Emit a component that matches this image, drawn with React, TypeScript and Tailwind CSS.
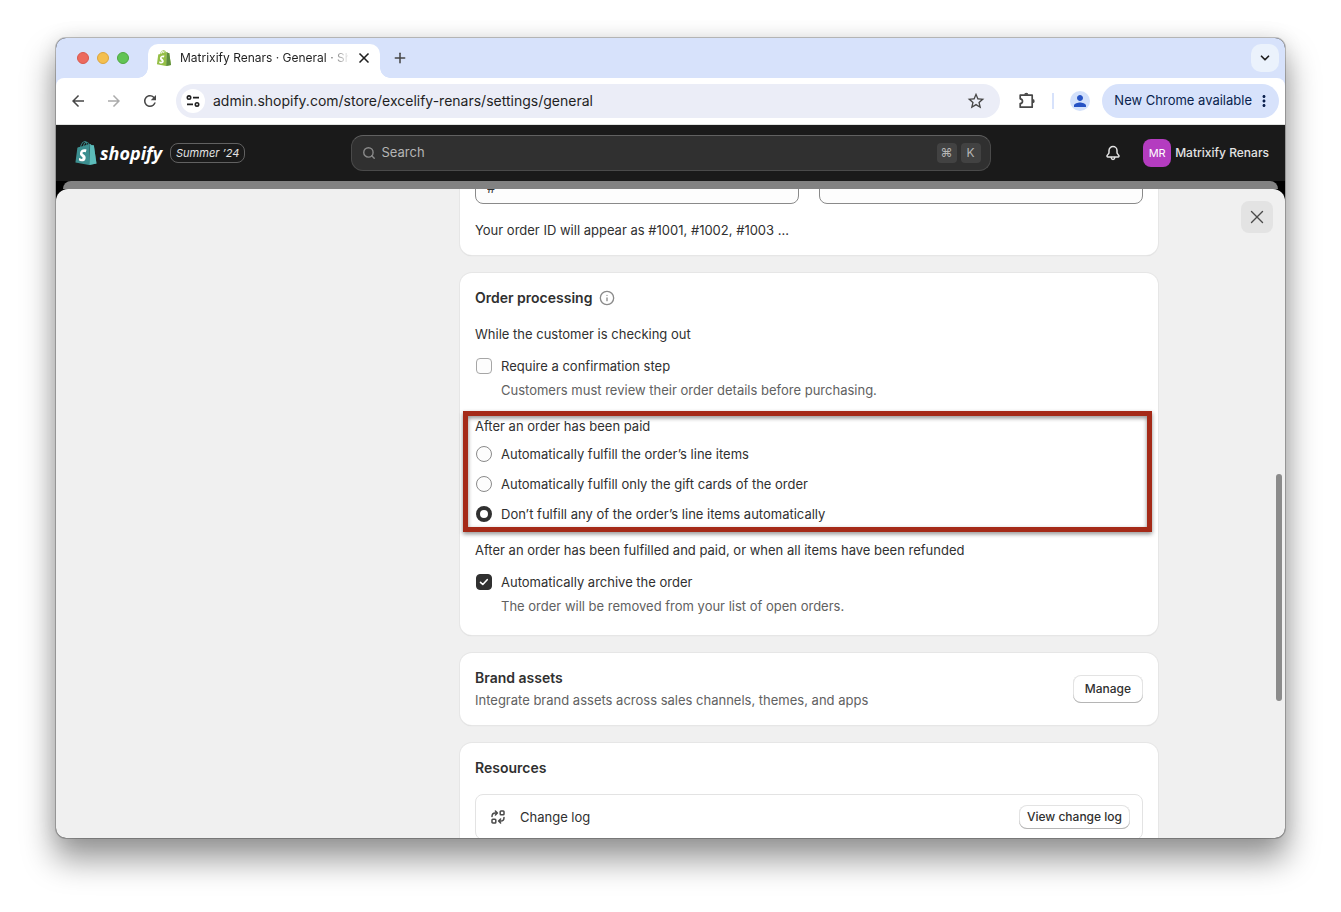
import { useState } from 'react';
import type { ReactNode } from 'react';
import { ChevronDown, Info, Plus, Search, X } from 'lucide-react';
import { MdArrowBack, MdArrowForward, MdMoreVert, MdPerson, MdRefresh, MdStarBorder } from 'react-icons/md';
import { SiShopify } from 'react-icons/si';

const fulfillOptions = [
  { id: 'all', label: 'Automatically fulfill the order’s line items' },
  { id: 'gift-cards', label: 'Automatically fulfill only the gift cards of the order' },
  { id: 'none', label: 'Don’t fulfill any of the order’s line items automatically' },
];

function Bag({ className, front, side }: { className: string; front: string; side: string }) {
  return (
    <svg viewBox="0 0 24 24" className={className} aria-hidden="true">
      <path fill="#fff" d="M4.5 7.5h8.4v13.2H4.5z" />
      <SiShopify size={24} color={front} />
      <path
        fill={side}
        d="M15.337 23.979l7.216-1.561s-2.604-17.613-2.625-17.73c-.018-.116-.114-.192-.211-.192s-1.929-.136-1.929-.136-1.275-1.274-1.439-1.411c-.045-.037-.075-.057-.121-.074l-.914 21.104z"
      />
    </svg>
  );
}

function TuneIcon() {
  return (
    <svg viewBox="0 0 14 14" className="size-3.5" fill="none" stroke="currentColor" strokeWidth="1.6" aria-hidden="true">
      <circle cx="3" cy="3.6" r="1.7" />
      <path d="M7 3.6h6M1 10.4h6" />
      <circle cx="11" cy="10.4" r="1.7" />
    </svg>
  );
}

function PuzzleIcon() {
  return (
    <svg viewBox="0 0 20 20" className="size-5" aria-hidden="true">
      <path
        d="M3.2 4.2h12v12h-12v-3.6c1.5-.2 2.3-1.2 2.3-2.4s-.8-2.2-2.3-2.4z"
        fill="none"
        stroke="currentColor"
        strokeWidth="1.7"
        strokeLinejoin="round"
      />
      <path d="M7.2 3.8a2.1 2.1 0 0 1 4.2 0zM15.6 8.1a2.1 2.1 0 0 1 0 4.2z" fill="currentColor" />
    </svg>
  );
}

function BellIcon() {
  return (
    <svg
      viewBox="0 0 16 16"
      className="size-4"
      fill="none"
      stroke="currentColor"
      strokeWidth="1.5"
      strokeLinecap="round"
      strokeLinejoin="round"
      aria-hidden="true"
    >
      <path d="M8 1.6a4 4 0 0 0-4 4v1.6c0 .6-.2 1.2-.6 1.7l-1.2 1.5c-.5.6-.1 1.6.7 1.6h10.2c.8 0 1.2-1 .7-1.6l-1.2-1.5c-.4-.5-.6-1.1-.6-1.7V5.6a4 4 0 0 0-4-4z" />
      <path d="M6.2 12.6c.2 1.1 1 1.8 1.8 1.8s1.6-.7 1.8-1.8" />
    </svg>
  );
}

function ChangeLogIcon() {
  return (
    <svg
      viewBox="0 0 14 14"
      className="size-3.5"
      fill="none"
      stroke="currentColor"
      strokeWidth="1.5"
      strokeLinecap="round"
      strokeLinejoin="round"
      aria-hidden="true"
    >
      <rect x="9.2" y="1" width="3.8" height="3.8" rx=".8" />
      <rect x="1" y="9.2" width="3.8" height="3.8" rx=".8" />
      <path d="M1 6.6C1 4.2 2.4 3 4.2 3h1.6M4.4 1l2 2-2 2M13 7.4c0 2.4-1.4 3.6-3.2 3.6H8.2M9.6 9l-2 2 2 2" />
    </svg>
  );
}

function BrowserTabs() {
  return (
    <div className="flex h-10 items-end bg-[#d7e2fb]">
      <div className="flex h-10 w-[92px] items-center gap-2 pl-[21px]">
        <span className="size-3 rounded-full border border-[#d9574d] bg-[#ec6a5e]" />
        <span className="size-3 rounded-full border border-[#dca53c] bg-[#f4bf4f]" />
        <span className="size-3 rounded-full border border-[#4fa73f] bg-[#61c454]" />
      </div>
      <div className="relative flex h-[34px] w-[232px] items-center rounded-t-[10px] bg-white pb-1.5 pl-2">
        <span className="absolute -left-2.5 bottom-0 size-2.5 bg-[radial-gradient(circle_at_0_0,transparent_9.5px,white_10px)]" />
        <span className="absolute -right-2.5 bottom-0 size-2.5 bg-[radial-gradient(circle_at_100%_0,transparent_9.5px,white_10px)]" />
        <Bag className="size-4" front="#95bf47" side="#5e8e3e" />
        <span className="ml-2 w-[168px] whitespace-nowrap text-xs text-[#1f1f1f] [mask-image:linear-gradient(to_right,black_145px,transparent_170px)]">
          Matrixify Renars · General · Sh
        </span>
        <button type="button" aria-label="Close tab" className="ml-2 text-[#1f1f1f]">
          <X className="size-4" strokeWidth={2.5} />
        </button>
      </div>
      <button type="button" aria-label="New tab" className="mb-3 ml-3 text-[#474747]">
        <Plus className="size-4" strokeWidth={2.3} />
      </button>
      <button
        type="button"
        aria-label="Search tabs"
        className="mb-1.5 ml-auto mr-1.5 flex size-7 items-center justify-center rounded-[10px] bg-[#ebf2fc] text-[#1f1f1f]"
      >
        <ChevronDown className="size-3.5" strokeWidth={3} />
      </button>
    </div>
  );
}

function AddressBar() {
  return (
    <div className="bg-[#d7e2fb]">
      <div className="flex h-[47px] items-center rounded-t-lg border-b border-[#e1e3e1] bg-white pl-[13px] pr-1.5 text-[#474747]">
        <button type="button" aria-label="Back">
          <MdArrowBack className="size-4.5" />
        </button>
        <button type="button" aria-label="Forward" className="ml-[18px] text-[#ababab]">
          <MdArrowForward className="size-4.5" />
        </button>
        <button type="button" aria-label="Reload" className="ml-[18px]">
          <MdRefresh className="size-4.5" />
        </button>
        <div className="ml-[17px] flex h-[34px] flex-1 items-center rounded-full bg-[#ebedf7] pl-[5px] pr-3.5">
          <button
            type="button"
            aria-label="Site information"
            className="flex size-6 items-center justify-center rounded-full bg-white text-[#1f1f1f]"
          >
            <TuneIcon />
          </button>
          <input
            type="text"
            aria-label="Address"
            defaultValue="admin.shopify.com/store/excelify-renars/settings/general"
            className="ml-2 min-w-0 flex-1 bg-transparent text-sm text-[#1f1f1f] outline-none"
          />
          <button type="button" aria-label="Bookmark this tab">
            <MdStarBorder className="size-5" />
          </button>
        </div>
        <button type="button" aria-label="Extensions" className="ml-[17px]">
          <PuzzleIcon />
        </button>
        <span className="ml-[15px] h-4 w-0.5 bg-[#d7e2fb]" />
        <button
          type="button"
          aria-label="Profile"
          className="ml-4 flex size-5 items-center justify-center rounded-full bg-[#d3e1fb] text-[#2753c4]"
        >
          <MdPerson className="size-[18px]" />
        </button>
        <button
          type="button"
          className="ml-3 flex h-[34px] items-center whitespace-nowrap rounded-full bg-[#d7e2fb] pl-3 pr-1.5 text-[13px] text-[#0a1f4d]"
        >
          New Chrome available
          <MdMoreVert className="ml-[3px] size-[18px]" />
        </button>
      </div>
    </div>
  );
}

function TopBar() {
  return (
    <header className="grid h-14 grid-cols-[1fr_640px_1fr] items-center bg-[#1a1a1a] px-4">
      <div className="flex items-center pl-0.5">
        <Bag className="size-6" front="#3c8f90" side="#5cbcba" />
        <span className="ml-0.5 font-['Open_Sans',sans-serif] text-lg font-bold italic leading-6 text-white">shopify</span>
        <span className="ml-2 rounded-lg border border-[#616161] px-[5px] text-[11px] italic leading-[18px] text-[#e3e3e3]">
          Summer ’24
        </span>
      </div>
      <label className="flex h-9 items-center rounded-xl border border-[#4a4a4a] border-t-[#616161] bg-[#303030] pl-2.5 pr-[9px] text-[#b5b5b5]">
        <Search className="size-3.5 text-[#8a8a8a]" strokeWidth={2.4} />
        <input
          type="text"
          aria-label="Search"
          placeholder="Search"
          className="ml-1.5 min-w-0 flex-1 bg-transparent text-[13px] outline-none placeholder:text-[#b5b5b5]"
        />
        <kbd className="flex size-5 items-center justify-center rounded bg-[#424242] font-[Inter] text-xs">⌘</kbd>
        <kbd className="ml-1 flex size-5 items-center justify-center rounded bg-[#424242] font-[Inter] text-xs">K</kbd>
      </label>
      <div className="flex items-center justify-end">
        <button type="button" aria-label="Notifications" className="text-[#e3e3e3]">
          <BellIcon />
        </button>
        <button type="button" className="ml-[22px] flex items-center gap-1 whitespace-nowrap text-xs font-medium text-[#e3e3e3]">
          <span className="flex size-7 items-center justify-center rounded-lg bg-[#b43cc0] text-[11px] font-normal text-white">MR</span>
          Matrixify Renars
        </button>
      </div>
    </header>
  );
}

function Card({ className = '', children }: { className?: string; children: ReactNode }) {
  return (
    <section
      className={`rounded-xl bg-white px-[15px] shadow-[0_0_0_1px_#e6e6e6,0_1px_1px_#cfcfcf] ${className}`}
    >
      {children}
    </section>
  );
}

function CheckRow({ label, help, defaultChecked = false }: { label: string; help: string; defaultChecked?: boolean }) {
  return (
    <div className="mt-3">
      <label className="flex items-center gap-[9px] pl-px">
        <span className="relative flex size-4">
          <input
            type="checkbox"
            defaultChecked={defaultChecked}
            className="peer size-4 appearance-none rounded border border-[#a6a6a6] bg-[#fdfdfd] checked:border-[#303030] checked:bg-[#303030]"
          />
          <svg
            viewBox="0 0 16 16"
            className="pointer-events-none absolute inset-0 hidden peer-checked:block"
            fill="none"
            stroke="white"
            strokeWidth="1.6"
            strokeLinecap="round"
            strokeLinejoin="round"
          >
            <path d="M4.5 8.3l2.3 2.2 4.4-4.8" />
          </svg>
        </span>
        {label}
      </label>
      <p className="mt-1 pl-[26px] text-[#616161]">{help}</p>
    </div>
  );
}

const headingStyle = 'text-sm leading-5 font-semibold';
const buttonStyle = 'rounded-lg bg-white text-xs font-medium shadow-[inset_0_-1px_0_#b5b5b5,inset_0_0_0_1px_#e3e3e3]';

export default function App() {
  const [fulfill, setFulfill] = useState('none');

  return (
    <div className="h-screen bg-white px-14 pb-[74px] pt-[38px] font-[Inter,sans-serif]">
      <div className="flex h-full flex-col overflow-hidden rounded-[10px] bg-black shadow-[0_0_0_1px_rgba(0,0,0,0.22),0_20px_32px_2px_rgba(0,0,0,0.4),0_0_20px_rgba(0,0,0,0.1)]">
        <BrowserTabs />
        <AddressBar />
        <TopBar />

        {/* Dimmed page that peeks out behind the settings sheet */}
        <div className="mx-[7px] h-2 shrink-0 rounded-t-lg bg-[#828282]" />

        <main className="relative min-h-0 flex-1 overflow-hidden rounded-t-xl bg-[#f0f0f0] text-[13px] leading-5 text-[#303030]">
          <div className="mx-auto grid max-w-[975px] grid-cols-[261px_1fr] gap-4">
            <div />
            <div className="-mt-8 flex min-w-0 flex-col gap-[18px]">
              <Card className="pb-[15px] pt-[15px]">
                <div className="grid grid-cols-2 gap-5">
                  <input
                    type="text"
                    aria-label="Prefix"
                    defaultValue="#"
                    className="h-8 min-w-0 rounded-lg border border-[#8a8a8a] bg-[#fdfdfd] px-[11px]"
                  />
                  <input
                    type="text"
                    aria-label="Suffix"
                    className="h-8 min-w-0 rounded-lg border border-[#8a8a8a] bg-[#fdfdfd] px-[11px]"
                  />
                </div>
                <p className="mt-4">Your order ID will appear as #1001, #1002, #1003 ...</p>
              </Card>

              <Card className="pb-[19px] pt-[15px]">
                <h2 className={`${headingStyle} flex items-center gap-[7px]`}>
                  Order processing
                  <Info className="size-4 text-[#8a8a8a]" />
                </h2>
                <p className="mt-4">While the customer is checking out</p>
                <CheckRow
                  label="Require a confirmation step"
                  help="Customers must review their order details before purchasing."
                />

                <div className="relative mt-4">
                  <fieldset>
                    <legend>After an order has been paid</legend>
                    <div className="mt-2 flex flex-col gap-2.5">
                      {fulfillOptions.map((option) => (
                        <label key={option.id} className="flex items-center gap-[9px] pl-px">
                          <input
                            type="radio"
                            name="fulfill"
                            checked={fulfill === option.id}
                            onChange={() => setFulfill(option.id)}
                            className="size-4 appearance-none rounded-full border border-[#8a8a8a] bg-[#fdfdfd] checked:border-4 checked:border-[#303030] checked:bg-white"
                          />
                          {option.label}
                        </label>
                      ))}
                    </div>
                  </fieldset>
                  <div className="pointer-events-none absolute -bottom-2 -left-3 -right-[9px] -top-[5px] border-[5px] border-[#a52a18] drop-shadow-[0_2px_2px_rgba(0,0,0,0.45)]" />
                </div>

                <p className="mt-4">After an order has been fulfilled and paid, or when all items have been refunded</p>
                <CheckRow
                  label="Automatically archive the order"
                  help="The order will be removed from your list of open orders."
                  defaultChecked
                />
              </Card>

              <Card className="flex items-center justify-between pb-[15px] pt-[15px]">
                <div>
                  <h2 className={headingStyle}>Brand assets</h2>
                  <p className="mt-0.5 text-[#616161]">Integrate brand assets across sales channels, themes, and apps</p>
                </div>
                <button type="button" className={`${buttonStyle} h-7 px-3`}>
                  Manage
                </button>
              </Card>

              <Card className="pb-4 pt-[15px]">
                <h2 className={headingStyle}>Resources</h2>
                <div className="mt-4 rounded-lg border border-[#e3e3e3]">
                  <div className="flex items-center px-3 py-2.5">
                    <span className="ml-[3px] text-[#4a4a4a]">
                      <ChangeLogIcon />
                    </span>
                    <span className="ml-[15px]">Change log</span>
                    <button type="button" className={`${buttonStyle} ml-auto h-6 px-2`}>
                      View change log
                    </button>
                  </div>
                </div>
              </Card>
            </div>
          </div>

          <button
            type="button"
            aria-label="Close settings"
            className="absolute right-3 top-3 flex size-8 items-center justify-center rounded-lg bg-[#e3e3e3] text-[#4a4a4a]"
          >
            <X className="size-[22px]" strokeWidth={1.5} />
          </button>
          <div className="absolute right-[3px] top-[285px] h-[227px] w-1.5 rounded-full bg-[#8b8b8b]" />
        </main>
      </div>
    </div>
  );
}
